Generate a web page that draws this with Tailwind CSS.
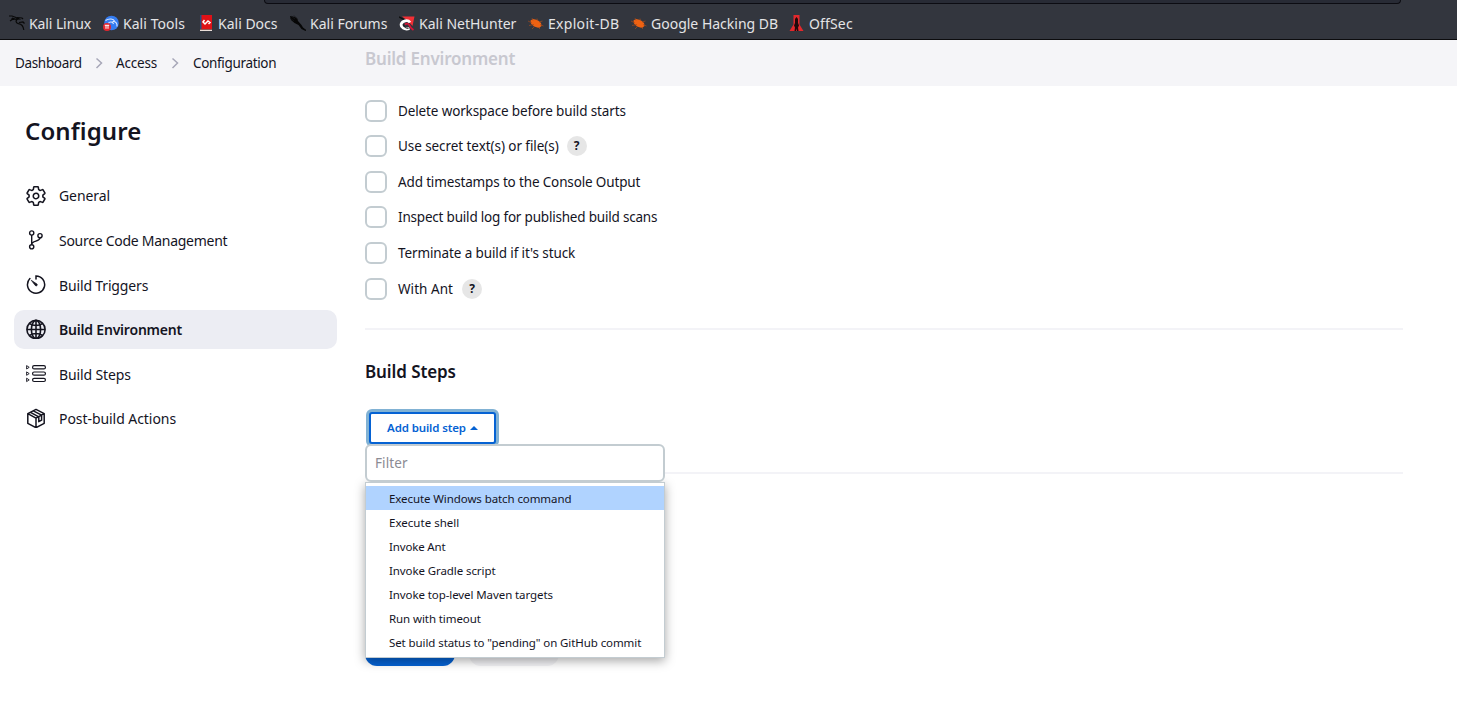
<!DOCTYPE html>
<html lang="en">
<head>
<meta charset="utf-8">
<title>Access Config [Jenkins]</title>
<script src="https://cdn.jsdelivr.net/npm/@tailwindcss/browser@4"></script>
</head>
<body class="h-[728px] w-[1457px] overflow-hidden bg-white font-['Noto_Sans',sans-serif] text-[14px] text-[#14141f]">
<header class="flex h-10 flex-col border-b border-[#0c0c0e] bg-[#33363e] text-[#e4e4e6]">
  <div class="ml-[264px] h-1 w-[1137px] shrink-0 rounded-b-[4px] border border-t-0 border-[#0c0c12] bg-[#282b35]"></div>
  <nav class="flex h-[35px] shrink-0 items-center pt-[3px] pl-[9px] text-[14px] whitespace-nowrap [&>a]:flex [&>a]:shrink-0 [&>a]:items-center [&>a]:gap-1 [&_svg]:size-4 [&_svg]:shrink-0">
    <a class="w-[94px] tracking-[-0.1px]"><svg viewBox="0 0 16 16" fill="none" stroke="#090909"><path d="M0 1h3l4 1.500 3 1.500-3 .2L3 3M1 6l3-2 4 .5M9.500 4c-3.500 1-3 4 0 4.700 3 .5 4.800 2.500 5.300 6.300M10 7.500l4-.5 1.500 1.500M8 2.500l5 .5 1 1M2 4l3 .5" stroke-width="1.200"/></svg><span>Kali Linux</span></a>
    <a class="w-[95px] tracking-[0.05px]"><svg viewBox="0 0 16 16"><circle cx="8.500" cy="8" r="7.300" fill="#347cf1"/><path d="M2.500 5.500c4-2.500 8-1.500 9 .5M5 8.500c2-2.500 5-1.500 5.500.5M9.500 6.500c3-.5 5 2 4.500 5" fill="none" stroke="#dfeaff" stroke-width="1.100"/><circle cx="4" cy="12" r="4" fill="#e3262e"/><path d="M1.800 10.300h4.400M3 10.300v3.500M5 10.300v3.500" stroke="#fff" stroke-width="1"/></svg><span>Kali Tools</span></a>
    <a class="w-[92px]"><svg viewBox="0 0 16 16"><path d="M2 0h12v14H2z" fill="#df1117"/><path d="M2 0h1.500v14H2z" fill="#274a7c"/><path d="M2 14h12v.7H2z" fill="#8c1014"/><path d="M2 14.700h12V16H2z" fill="#eaded8"/><path d="M6.500 5L5 7l2 2 3-3 2 1.500L10.500 9" fill="none" stroke="#fff" stroke-width="1.500"/></svg><span>Kali Docs</span></a>
    <a class="w-[109px]"><svg viewBox="0 0 16 16"><path d="M0 1l3 .5L7 3l1 3 3.500 4 1.500 2.500 3.500 2.500-1 1-4-2-3-4-4-2L1 5z" fill="#060606"/><path d="M1 1l4 3M4 .5L8 5M0 3l4 3" stroke="#17181a" stroke-width=".8"/></svg><span>Kali Forums</span></a>
    <a class="w-[129px]"><svg viewBox="0 0 16 16"><path d="M3 1.500h12.500L13.500 11 9 6z" fill="#f22f35"/><path d="M0 2l5 2.500" stroke="#111" stroke-width="1.500"/><path d="M10.500 13.500c-5 1.500-9-1-8.300-4.500C3.500 5.500 9 4.500 11 7.500" fill="none" stroke="#fff" stroke-width="2.800"/><path d="M6 9.500c2-2 4-.5 4.800 1.500S13 14 14.500 15" fill="none" stroke="#d91335" stroke-width="1.800"/><path d="M4.500 9.500c.5 3 2.500 4 5 4" fill="none" stroke="#111" stroke-width=".8"/></svg><span>Kali NetHunter</span></a>
    <a class="w-[103px] tracking-[0.3px]"><svg viewBox="0 0 16 16"><path d="M2.500 5.500L5 4l4.500 1 3.500 3 .5 3-2.500 2-5-1.500L3 8.500z" fill="#ef6212"/><path d="M0 6l4 2M1 10.500l5-1M4 14l3-3M10 12l2 2M11 7l3.500-1M12 9.500l3.500 1.500M4 3l1 2.500M9 3.500l.5 2.500" stroke="#a44c1e" stroke-width=".7"/></svg><span>Exploit-DB</span></a>
    <a class="w-[158px]"><svg viewBox="0 0 16 16"><path d="M2.500 5.500L5 4l4.500 1 3.500 3 .5 3-2.500 2-5-1.500L3 8.500z" fill="#ef6212"/><path d="M0 6l4 2M1 10.500l5-1M4 14l3-3M10 12l2 2M11 7l3.500-1M12 9.500l3.500 1.500M4 3l1 2.500M9 3.500l.5 2.500" stroke="#a44c1e" stroke-width=".7"/></svg><span>Google Hacking DB</span></a>
    <a class="tracking-[0.15px]"><svg viewBox="0 0 16 16"><path d="M4.500 0h6v9.500l4 6.500H.5l4-6.500z" fill="#e2282c"/><path d="M7.500 2L9 4v4l1 2.500-1 2 .5 3.500H8l-.5-2.500L7 16H5.500l.5-3.500-1-2L6 8V4z" fill="#20090b"/></svg><span>OffSec</span></a>
  </nav>
</header>
<div class="flex h-[46px] bg-[#f5f5f8]">
  <nav class="flex w-[365px] items-center pl-[15px] text-[13.5px] tracking-[-0.34px] whitespace-nowrap">
    <span class="w-[80px]">Dashboard</span>
    <svg class="mr-[13px] h-3 w-2" viewBox="0 0 8 12" fill="none" stroke="#a7a7b8" stroke-width="1.500"><path d="M1.500 1.500L6.500 6l-5 5"/></svg>
    <span class="w-[55px] tracking-[-0.2px]">Access</span>
    <svg class="mr-[14px] h-3 w-2" viewBox="0 0 8 12" fill="none" stroke="#a7a7b8" stroke-width="1.500"><path d="M1.500 1.500L6.500 6l-5 5"/></svg>
    <span>Configuration</span>
  </nav>
  <h2 class="pt-[7px] text-[17px] leading-6 font-semibold tracking-[-0.2px] text-[#c8c8d0]">Build Environment</h2>
</div>
<main class="flex">
  <aside class="w-[365px] pr-7 pl-[14px]">
    <h1 class="mt-[27px] ml-[11px] text-[24px] leading-9 font-semibold tracking-[0.1px]">Configure</h1>
    <ul class="mt-[27px] flex flex-col gap-[5.600px] [&>li]:flex [&>li]:h-[39px] [&>li]:items-center [&>li]:gap-[13px] [&>li]:rounded-[10px] [&>li]:pl-3 [&_svg]:size-5 [&_svg]:shrink-0">
      <li><svg viewBox="0 0 512 512" class="scale-110" fill="none" stroke="currentColor" stroke-width="36" stroke-linecap="round" stroke-linejoin="round"><path d="M262.290 192.310a64 64 0 1057.400 57.400 64.130 64.130 0 00-57.400-57.400zM416.390 256a154.340 154.340 0 01-1.530 20.790l45.210 35.460a10.810 10.810 0 012.450 13.750l-42.770 74a10.810 10.810 0 01-13.140 4.590l-44.900-18.080a16.110 16.110 0 00-15.170 1.750A164.480 164.480 0 01325 400.800a15.940 15.940 0 00-8.820 12.140l-6.730 47.890a11.080 11.080 0 01-10.680 9.170h-85.540a11.110 11.110 0 01-10.690-8.870l-6.720-47.820a16.070 16.070 0 00-9-12.220 155.300 155.300 0 01-21.460-12.570 16 16 0 00-15.110-1.710l-44.890 18.070a10.810 10.810 0 01-13.140-4.580l-42.770-74a10.800 10.800 0 012.450-13.750l38.210-30a16.050 16.050 0 006-14.080c-.36-4.170-.58-8.330-.58-12.500s.21-8.270.58-12.350a16 16 0 00-6.070-13.940l-38.190-30A10.810 10.810 0 0149.480 186l42.770-74a10.810 10.810 0 0113.140-4.590l44.900 18.080a16.110 16.110 0 0015.170-1.750A164.480 164.480 0 01187 111.200a15.940 15.940 0 008.820-12.140l6.730-47.890A11.080 11.080 0 01213.230 42h85.540a11.110 11.110 0 0110.690 8.870l6.720 47.820a16.070 16.070 0 009 12.220 155.300 155.300 0 0121.460 12.570 16 16 0 0015.110 1.710l44.890-18.070a10.810 10.810 0 0113.140 4.580l42.770 74a10.800 10.800 0 01-2.450 13.750l-38.210 30a16.050 16.050 0 00-6.050 14.080c.33 4.140.55 8.300.55 12.470z"/></svg><span class="tracking-[-0.1px]">General</span></li>
      <li><svg viewBox="0 0 20 20" fill="none" stroke="currentColor" stroke-width="1.400"><circle cx="5.700" cy="3" r="2.100"/><circle cx="5.700" cy="16.800" r="2.100"/><circle cx="14" cy="5.700" r="2.100"/><path d="M5.700 5.100v9.600M14 7.800c0 4-8.300 2.500-8.300 6.600"/></svg><span class="pt-px tracking-[-0.27px]">Source Code Management</span></li>
      <li><svg viewBox="0 0 20 20" fill="none" stroke="currentColor" stroke-width="1.500" stroke-linecap="round"><path d="M10 4V1a8.600 8.600 0 11-6.100 2.600"/><path d="M5.600 5.500l5.400 3.600a1.100 1.100 0 01-1.500 1.600z" fill="currentColor" stroke-width=".7"/></svg><span class="pt-px tracking-[-0.15px]">Build Triggers</span></li>
      <li class="bg-[#ecedf3] font-semibold"><svg viewBox="0 -.5 20 20" fill="none" stroke="currentColor" stroke-width="1.600"><circle cx="10" cy="10" r="9.100"/><ellipse cx="10" cy="10" rx="4.600" ry="9.100"/><path d="M10 1v18M1 10h18M3.500 4.200c3.600 2.400 9.400 2.400 13 0M3.500 15.800c3.600-2.400 9.400-2.400 13 0"/></svg><span class="pt-px tracking-[-0.2px]">Build Environment</span></li>
      <li><svg viewBox="0 0 20 20" fill="none" stroke="currentColor" stroke-width="1.200"><rect x="6.600" y="1.700" width="12.800" height="3.200" rx="1.500"/><rect x="6.600" y="8" width="12.800" height="3.200" rx="1.500"/><rect x="6.600" y="14.300" width="12.800" height="3.200" rx="1.500"/><path d="M.6 1.600L3.200 3.300.6 5zM.6 7.900l2.600 1.700-2.600 1.700zM.6 14.200l2.600 1.700-2.600 1.700z" stroke-width=".9" stroke-linejoin="round"/></svg><span class="pt-px tracking-[-0.13px]">Build Steps</span></li>
      <li><svg viewBox="0 -.5 20 20" fill="none" stroke="currentColor" stroke-width="1.500" stroke-linejoin="round" stroke-linecap="round"><path d="M10 .9l8.200 4.300v9.600L10 19.200l-8.200-4.400V5.200zM1.800 5.200L10 9.700l8.200-4.500M10 9.700v9.500M4.500 3.800l8.300 4.500v4.900l2.800-1.500V6.600L7.300 2.400"/></svg><span class="pt-px tracking-[-0.06px]">Post-build Actions</span></li>
    </ul>
  </aside>
  <section class="w-[1038px] pt-[7px]">
    <ul class="[&>li]:flex [&>li]:h-[35.600px] [&>li]:items-center [&>li]:gap-[11px] [&>li]:text-[13.500px] [&_i]:block [&_i]:size-[22px] [&_i]:rounded-[6px] [&_i]:border-2 [&_i]:border-[#c3ccd1] [&_b]:-ml-[3px] [&_b]:flex [&_b]:size-5 [&_b]:items-center [&_b]:justify-center [&_b]:rounded-full [&_b]:bg-[#e6e6e6] [&_b]:text-[12px]">
      <li><i></i><span class="tracking-[-0.13px]">Delete workspace before build starts</span></li>
      <li><i></i><span class="tracking-[-0.07px]">Use secret text(s) or file(s)</span><b>?</b></li>
      <li><i></i><span class="tracking-[-0.15px]">Add timestamps to the Console Output</span></li>
      <li><i class="mb-px"></i><span class="tracking-[-0.2px]">Inspect build log for published build scans</span></li>
      <li><i></i><span class="tracking-[-0.11px]">Terminate a build if it's stuck</span></li>
      <li><i></i><span class="w-14 tracking-[0.05px]">With Ant</span><b>?</b></li>
    </ul>
    <hr class="mt-[21px] border-t-2 border-[#f3f3f7]">
    <h2 class="mt-[30px] text-[17px] leading-6 font-semibold tracking-[-0.1px]">Build Steps</h2>
    <div class="relative mt-[28px] h-[60px]">
      <button class="ml-1 flex h-[32px] w-[127px] items-center justify-center gap-1 rounded-[3px] border-2 border-[#0562d3] bg-white text-[11.5px] font-semibold tracking-[-0.13px] text-[#0562d3] ring-[3px] ring-[#81b2d4]"><span>Add build step</span><svg class="h-1 w-2" viewBox="0 0 8 4"><path d="M0 4l4-4 4 4z" fill="currentColor"/></svg></button>
      <div class="absolute top-[32px] left-0 z-10 w-[300px]">
        <div class="relative z-10 flex h-[38px] items-center rounded-[6px] border-2 border-[#c3ccd1] bg-white pt-0.5 pl-2 text-[13.500px] text-[#8b8b93]"><span class="tracking-[0.1px]">Filter</span></div>
        <ul class="h-[176px] border border-[#c3ccd1] bg-white pt-[3px] text-[11.5px] tracking-[-0.09px] shadow-[0_3px_10px_rgba(0,0,0,0.35)] [&>li]:flex [&>li]:h-6 [&>li]:items-center [&>li]:pt-0.5 [&>li]:pl-[23px]">
          <li class="bg-[#b0d3ff]"><span>Execute Windows batch command</span></li>
          <li class="tracking-[0.02px]"><span>Execute shell</span></li>
          <li class="tracking-[-0.15px]"><span>Invoke Ant</span></li>
          <li><span>Invoke Gradle script</span></li>
          <li><span>Invoke top-level Maven targets</span></li>
          <li><span>Run with timeout</span></li>
          <li><span>Set build status to "pending" on GitHub commit</span></li>
        </ul>
      </div>
    </div>
    <hr class="border-t-2 border-[#f3f3f7]">
    <div class="mt-[156px] flex gap-[14px]">
      <div class="h-9 w-[90px] rounded-[12px] bg-[#0562d3]"></div>
      <div class="h-9 w-[90px] rounded-[12px] bg-[#f3f3f6]"></div>
    </div>
  </section>
</main>
</body>
</html>
